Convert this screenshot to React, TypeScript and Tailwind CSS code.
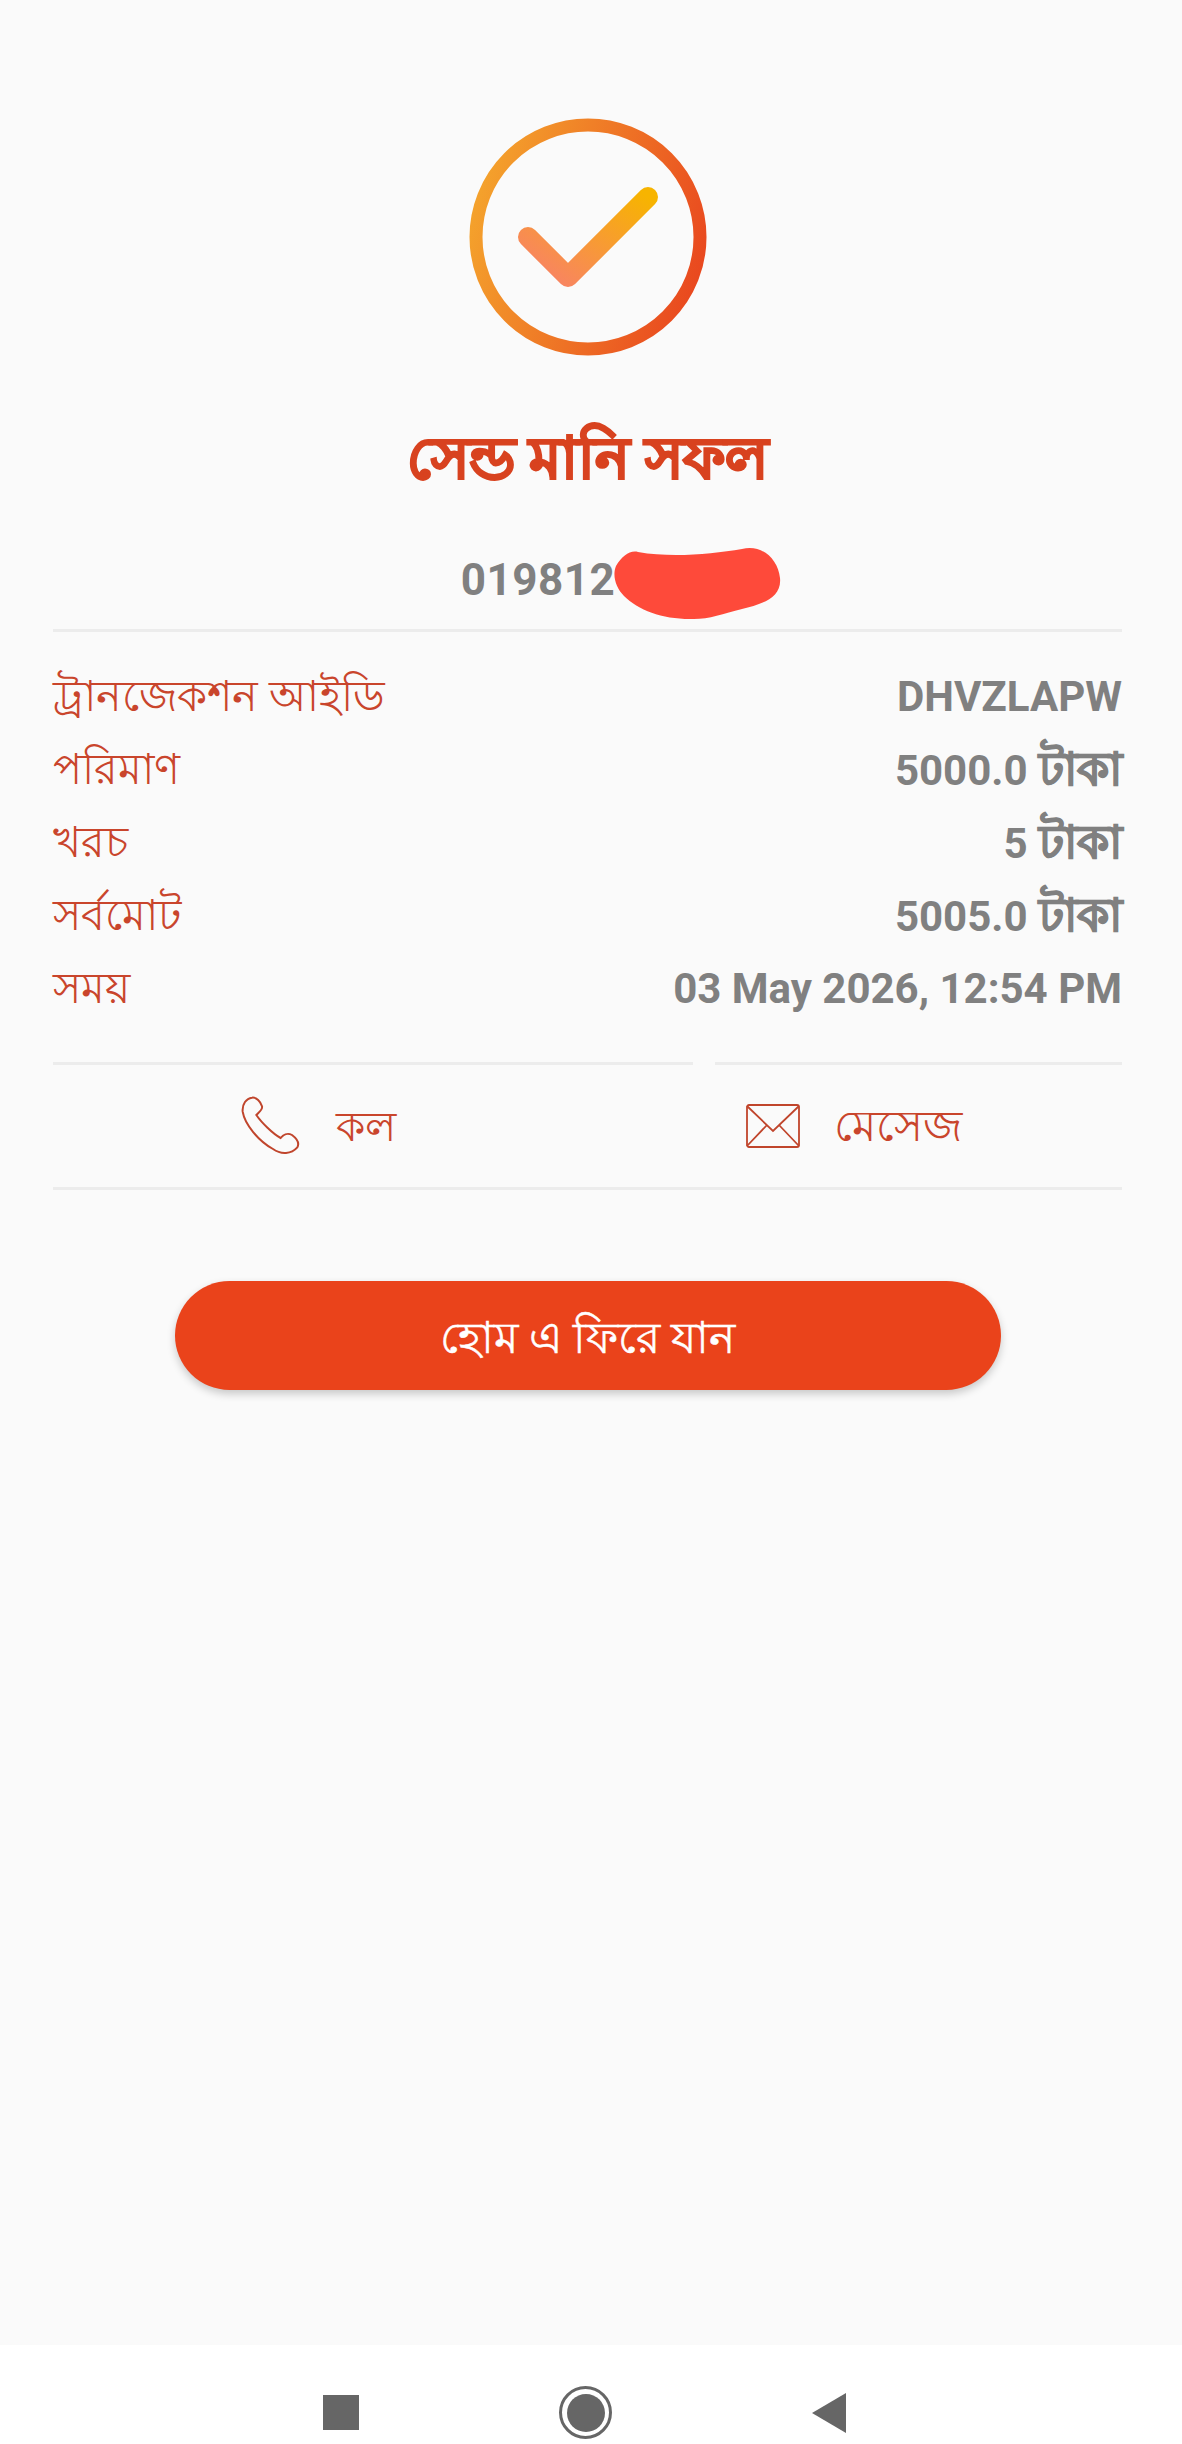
const rows = [
  { label: "ট্রানজেকশন আইডি", value: "DHVZLAPW", unit: "" },
  { label: "পরিমাণ", value: "5000.0", unit: "টাকা" },
  { label: "খরচ", value: "5", unit: "টাকা" },
  { label: "সর্বমোট", value: "5005.0", unit: "টাকা" },
  { label: "সময়", value: "03 May 2026, 12:54 PM", unit: "" },
];

function CheckCircle() {
  return (
    <svg width="240" height="240" viewBox="0 0 240 240" fill="none">
      <defs>
        <linearGradient id="ring" x1="0" y1="0.35" x2="1" y2="0.65">
          <stop offset="0" stopColor="#f4a12c" />
          <stop offset="1" stopColor="#e9491f" />
        </linearGradient>
        <linearGradient id="tick" x1="0" y1="1" x2="1" y2="0">
          <stop offset="0" stopColor="#f8806a" />
          <stop offset="1" stopColor="#f7b400" />
        </linearGradient>
      </defs>
      <circle cx="120" cy="120" r="112" stroke="url(#ring)" strokeWidth="13" />
      <path
        d="M60 120 L100 160 L180 80"
        stroke="url(#tick)"
        strokeWidth="20"
        strokeLinecap="round"
        strokeLinejoin="round"
      />
    </svg>
  );
}

function PhoneIcon() {
  return (
    <svg width="65" height="65" viewBox="30 25 195 195" fill="none" stroke="#c0452c" strokeWidth="6">
      <path d="M72 36 C55 38 42 55 44 78 C50 115 90 165 135 190 C160 208 190 205 208 185 C215 172 208 160 192 148 C178 140 165 148 158 157 C135 145 100 110 85 88 C92 80 105 72 102 62 C98 48 85 34 72 36 Z" />
    </svg>
  );
}

function MailIcon() {
  return (
    <svg width="54" height="44" viewBox="0 0 54 44" fill="none" stroke="#c0452c" strokeWidth="1.8">
      <rect x="1" y="1" width="52" height="42" rx="2" />
      <path d="M1 2 L27 27 L53 2 M1 42 L21 21 M53 42 L33 21" />
    </svg>
  );
}

export default function App() {
  return (
    <div className="w-[1182px] h-[2444px] flex flex-col bg-[#fafafa] font-['Roboto','Noto_Sans',sans-serif]">
      <div className="flex-1 flex flex-col items-center pt-[117px] pl-[53px] pr-[60px]">
        <CheckCircle />

        <h1 className="mt-[71px] h-[60px] leading-[60px] text-[58px] font-bold text-[#d8421f] [-webkit-text-stroke:2px_#d8421f]">
          সেন্ড মানি সফল
        </h1>

        {/* phone number */}
        <div className="relative mt-[61px] h-[62px] flex items-center justify-center">
          <span className="text-[44px] leading-[62px] font-bold text-[#808080] tracking-[0.5px]">019812</span>
          <span className="w-[99px]" />
          <svg className="absolute left-[151px] top-[-5px]" width="170" height="76" viewBox="0 0 170 76">
            <path
              d="M4 22 C10 12 18 6 26 8 C60 14 100 10 130 5 C150 0 166 15 168 34 C170 54 150 60 130 65 C110 70 95 76 78 75 C50 75 26 66 12 52 C4 44 0 32 4 22 Z"
              fill="#fe4a3a"
            />
          </svg>
        </div>

        <div className="w-full mt-[18px] h-[3px] bg-[#ececec]" />

        <div className="w-full mt-[28px] flex flex-col">
          {rows.map((row) => (
            <div key={row.label} className="h-[73px] flex items-center justify-between">
              <span className="text-[43px] text-[#c9452c]">{row.label}</span>
              <span className="text-[42px] font-bold text-[#808080]">
                {row.value}
                {row.unit && <span className="text-[46px] [-webkit-text-stroke:1px_#808080]"> {row.unit}</span>}
              </span>
            </div>
          ))}
        </div>

        <div className="w-full mt-[37px] flex justify-between">
          <div className="w-[640px] h-[3px] bg-[#ececec]" />
          <div className="w-[407px] h-[3px] bg-[#ececec]" />
        </div>

        <div className="w-full h-[122px] flex items-center">
          <div className="w-1/2 flex items-center justify-center gap-[33px] pr-[6px]">
            <PhoneIcon />
            <span className="text-[42px] text-[#c9452c]">কল</span>
          </div>
          <div className="w-1/2 flex items-center justify-center gap-[34px] pr-[2px]">
            <MailIcon />
            <span className="text-[44px] text-[#c9452c]">মেসেজ</span>
          </div>
        </div>

        <div className="w-full h-[3px] bg-[#ececec]" />

        <button className="mt-[91px] w-[826px] h-[109px] pt-[5px] rounded-full bg-[#ea431b] text-white text-[44px] [-webkit-text-stroke:0.5px_#ffffff] shadow-[0_4px_8px_rgba(0,0,0,0.2)]">
          হোম এ ফিরে যান
        </button>
      </div>

      {/* android nav bar */}
      <div className="h-[99px] bg-white flex items-center justify-center gap-[200px] pt-[36px] pr-[13px]">
        <div className="w-[36px] h-[35px] bg-[#666666]" />
        <div className="w-[53px] h-[53px] rounded-full border-[3px] border-[#666666] flex items-center justify-center">
          <div className="w-[38px] h-[38px] rounded-full bg-[#666666]" />
        </div>
        <svg width="34" height="40" viewBox="0 0 34 40">
          <path d="M0 20 L34 0 L34 40 Z" fill="#666666" />
        </svg>
      </div>
    </div>
  );
}
